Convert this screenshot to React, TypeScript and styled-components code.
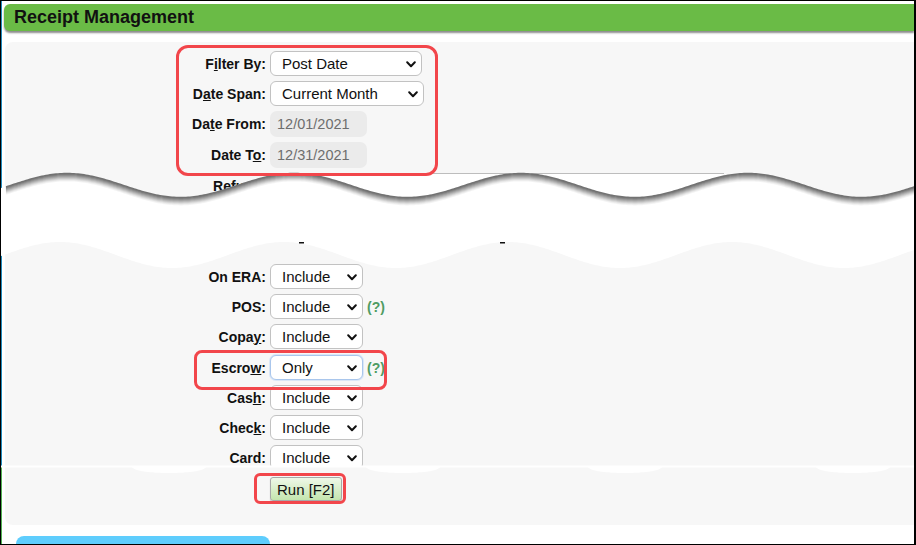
import React from 'react';
import styled, { createGlobalStyle } from 'styled-components';

const Global = createGlobalStyle`
  html, body { margin: 0; padding: 0; background: #fff; }
  body { font-family: "Liberation Sans", Arial, sans-serif; }
`;

const FONT = `"Liberation Sans", Arial, sans-serif`;

const Frame = styled.div`
  position: relative;
  box-sizing: border-box;
  width: 916px;
  height: 545px;
  border-top: 1px solid #000;
  border-bottom: 1px solid #000;
  border-left: 1px solid #000;
  border-right: 2px solid #000;
  overflow: hidden;
  background:
    linear-gradient(to bottom, #1f8bbd 0, #1f8bbd 465px, #52b152 465px) left top / 1px 100% no-repeat,
    #fff;
`;

const Header = styled.h1`
  margin: 3px 0 0 3px;
  height: 27px;
  box-sizing: border-box;
  padding-left: 10px;
  display: flex;
  align-items: center;
  background: #6abb46;
  border-radius: 6px 0 0 6px;
  box-shadow: 0 2px 2px rgba(0, 0, 0, 0.45);
  font-family: ${FONT};
  font-size: 18px;
  font-weight: bold;
  color: #111;
`;

const Panel = styled.section`
  margin: 11px 0 0 4px;
  background: #f7f7f7;
  border-radius: 8px 0 0 8px;
`;

const Piece = styled.div<{ $height: number; $padTop: number }>`
  height: ${(p) => p.$height}px;
  box-sizing: border-box;
  padding-top: ${(p) => p.$padTop}px;
  overflow: hidden;
  display: flex;
  flex-direction: column;
  gap: 5px;
`;

const Callout = styled.div<{ $l: number; $t: number; $w: number; $h: number; $r: number; $mt?: number }>`
  position: relative;
  display: flex;
  flex-direction: column;
  gap: 5px;
  margin-top: ${(p) => p.$mt ?? 0}px;
  &::after {
    content: '';
    position: absolute;
    z-index: 3;
    left: ${(p) => p.$l}px;
    top: ${(p) => p.$t}px;
    width: ${(p) => p.$w}px;
    height: ${(p) => p.$h}px;
    box-sizing: border-box;
    border: 3px solid #f2464b;
    border-radius: ${(p) => p.$r}px;
    pointer-events: none;
  }
`;

const Row = styled.div<{ $h?: number }>`
  display: grid;
  grid-template-columns: 261px max-content max-content;
  column-gap: 4px;
  align-items: center;
  height: ${(p) => p.$h ?? 25}px;
`;

const Label = styled.label`
  text-align: right;
  font-family: ${FONT};
  font-size: 14px;
  font-weight: bold;
  color: #111;
  white-space: nowrap;
`;

const SelectWrap = styled.div<{ $w: number }>`
  position: relative;
  width: ${(p) => p.$w}px;
  height: 25px;
`;

const Select = styled.select<{ $focus?: boolean }>`
  appearance: none;
  -webkit-appearance: none;
  display: block;
  width: 100%;
  height: 100%;
  box-sizing: border-box;
  margin: 0;
  border: 1px solid ${(p) => (p.$focus ? '#a9c6ec' : '#c2c2c2')};
  box-shadow: ${(p) => (p.$focus ? '0 0 0 1px #d9e6f7' : 'none')};
  border-radius: 6px;
  background: #fff;
  padding: 0 0 0 11px;
  font-family: ${FONT};
  font-size: 15px;
  color: #111;
  outline: none;
`;

const Chevron = styled.svg`
  position: absolute;
  right: 6px;
  top: 10px;
  pointer-events: none;
`;

const DateInput = styled.input`
  width: 97px;
  height: 26px;
  box-sizing: border-box;
  margin: 0;
  border: none;
  border-radius: 7px;
  background: #ebebeb;
  padding: 0 0 0 7px;
  font-family: ${FONT};
  font-size: 14.5px;
  color: #6e6e6e;
  outline: none;
`;

const WideInput = styled.input`
  width: 454px;
  height: 26px;
  box-sizing: border-box;
  margin: 0;
  border: 1px solid #bdbdbd;
  border-right: none;
  border-radius: 2px 0 0 2px;
  background: #fff;
  outline: none;
`;

const Help = styled.span`
  font-family: ${FONT};
  font-size: 14px;
  font-weight: bold;
  color: #4f9c63;
`;

const RunButton = styled.button`
  height: 24px;
  padding: 0 6px;
  box-sizing: border-box;
  margin: 0;
  border: 1px solid #a8a8a8;
  border-radius: 3px;
  background: linear-gradient(#eef8e8, #c4e5ae);
  box-shadow: 0 1px 1px rgba(0, 0, 0, 0.25);
  font-family: ${FONT};
  font-size: 15px;
  color: #111;
`;

const TearGap = styled.div<{ $h: number }>`
  position: relative;
  height: ${(p) => p.$h}px;
`;

const TearArt = styled.svg<{ $top: number }>`
  position: absolute;
  left: -5px;
  top: ${(p) => p.$top}px;
  z-index: 1;
  display: block;
`;

const Tab = styled.div`
  margin: 11px 0 0 15px;
  width: 254px;
  height: 20px;
  background: #5ecdfd;
  border-radius: 8px 8px 0 0;
`;

/* ---------- helpers ---------- */

const wave = (base: number, amp: number, phase: number, period: number) => (x: number) =>
  base - amp * Math.cos((2 * Math.PI * (x - phase)) / period);

const sample = (f: (x: number) => number, from: number, to: number, step: number, dy = 0) => {
  const out: string[] = [];
  const dir = to >= from ? 1 : -1;
  for (let x = from; dir > 0 ? x <= to : x >= to; x += step * dir) {
    out.push(`${x.toFixed(1)},${(f(x) + dy).toFixed(2)}`);
  }
  return out;
};

const upper = wave(185, 12, 67, 227);
const lower = wave(255, 13, 60, 224);

const TornEdge: React.FC = () => {
  const top = sample(upper, 0, 916, 2);
  const bottom = sample(lower, 916, 0, 2);
  const fill = `M${top.join(' L')} L${bottom.join(' L')} Z`;
  const greys = ['#f4f4f4', '#e6e6e6', '#d4d4d4', '#c0c0c0', '#acacac', '#989898', '#848484', '#727272'];
  return (
    <TearArt $top={-40} width={916} height={110} viewBox="0 165 916 110">
      <path d={fill} fill="#fff" />
      {greys.map((c, i) => {
        const k = greys.length - 1 - i;
        return (
          <polyline
            key={k}
            points={sample(upper, 6, 916, 2, k + 0.6).join(' ')}
            fill="none"
            stroke={c}
            strokeWidth={1.6}
          />
        );
      })}
      <rect x={299} y={242} width={5} height={1.5} fill="#111" />
      <rect x={500} y={242} width={5} height={1.5} fill="#111" />
    </TearArt>
  );
};

const bulges = [169, 403, 625, 853];
const seam = (x: number) => {
  let y = 467.5;
  for (const c of bulges) {
    const t = (x - c) / 36;
    if (Math.abs(t) < 1) y = Math.max(y, 467.5 + 5.5 * Math.sqrt(1 - t * t));
  }
  return y;
};

const SoftSeam: React.FC = () => {
  const bottom = sample(seam, 916, 0, 2);
  return (
    <TearArt $top={-3} width={916} height={12} viewBox="0 463 916 12">
      <path d={`M0,465.5 L916,465.5 L${bottom.join(' L')} Z`} fill="#fff" />
    </TearArt>
  );
};

const Caret: React.FC = () => (
  <Chevron width="10" height="7" viewBox="0 0 10 7">
    <path d="M1.2 1.3 L5 5.2 L8.8 1.3" fill="none" stroke="#111" strokeWidth="2" strokeLinecap="round" strokeLinejoin="round" />
  </Chevron>
);

const Dropdown: React.FC<{ value: string; options: string[]; width: number; focus?: boolean }> = ({
  value,
  options,
  width,
  focus,
}) => (
  <SelectWrap $w={width}>
    <Select defaultValue={value} $focus={focus}>
      {options.map((o) => (
        <option key={o}>{o}</option>
      ))}
    </Select>
    <Caret />
  </SelectWrap>
);

const TRI = ['Include', 'Exclude', 'Only'];

export default function App() {
  return (
    <>
      <Global />
      <Frame>
        <Header>Receipt Management</Header>
        <Panel>
          <Piece $height={163} $padTop={9}>
            <Callout $l={171} $t={-6} $w={262} $h={131} $r={12}>
              <Row>
                <Label>
                  F<u>i</u>lter By:
                </Label>
                <Dropdown value="Post Date" options={['Post Date', 'Deposit Date', 'Service Date']} width={152} />
              </Row>
              <Row>
                <Label>
                  D<u>a</u>te Span:
                </Label>
                <Dropdown
                  value="Current Month"
                  options={['Current Month', 'Previous Month', 'Custom']}
                  width={154}
                />
              </Row>
              <Row $h={26}>
                <Label>
                  Da<u>t</u>e From:
                </Label>
                <DateInput readOnly defaultValue="12/01/2021" />
              </Row>
              <Row $h={26}>
                <Label>
                  Date T<u>o</u>:
                </Label>
                <DateInput readOnly defaultValue="12/31/2021" />
              </Row>
            </Callout>
            <Row $h={26}>
              <Label>Refund:</Label>
              <WideInput readOnly />
            </Row>
          </Piece>

          <TearGap $h={51}>
            <TornEdge />
          </TearGap>

          <Piece $height={210} $padTop={8}>
            <Row>
              <Label>On ERA:</Label>
              <Dropdown value="Include" options={TRI} width={93} />
            </Row>
            <Row>
              <Label>POS:</Label>
              <Dropdown value="Include" options={TRI} width={93} />
              <Help>(?)</Help>
            </Row>
            <Row>
              <Label>
                Copa<u>y</u>:
              </Label>
              <Dropdown value="Include" options={TRI} width={93} />
            </Row>
            <Callout $l={189} $t={-5} $w={193} $h={40} $r={8} $mt={1}>
              <Row>
                <Label>
                  Escro<u>w</u>:
                </Label>
                <Dropdown value="Only" options={TRI} width={93} focus />
                <Help>(?)</Help>
              </Row>
            </Callout>
            <Row>
              <Label>
                Cas<u>h</u>:
              </Label>
              <Dropdown value="Include" options={TRI} width={93} />
            </Row>
            <Row>
              <Label>
                Chec<u>k</u>:
              </Label>
              <Dropdown value="Include" options={TRI} width={93} />
            </Row>
            <Row>
              <Label>Card:</Label>
              <Dropdown value="Include" options={TRI} width={93} />
            </Row>
          </Piece>

          <TearGap $h={0}>
            <SoftSeam />
          </TearGap>

          <Piece $height={59} $padTop={11}>
            <Callout $l={249} $t={-4} $w={92} $h={31} $r={6}>
              <Row $h={24}>
                <span />
                <RunButton type="button">Run [F2]</RunButton>
              </Row>
            </Callout>
          </Piece>
        </Panel>
        <Tab />
      </Frame>
    </>
  );
}
